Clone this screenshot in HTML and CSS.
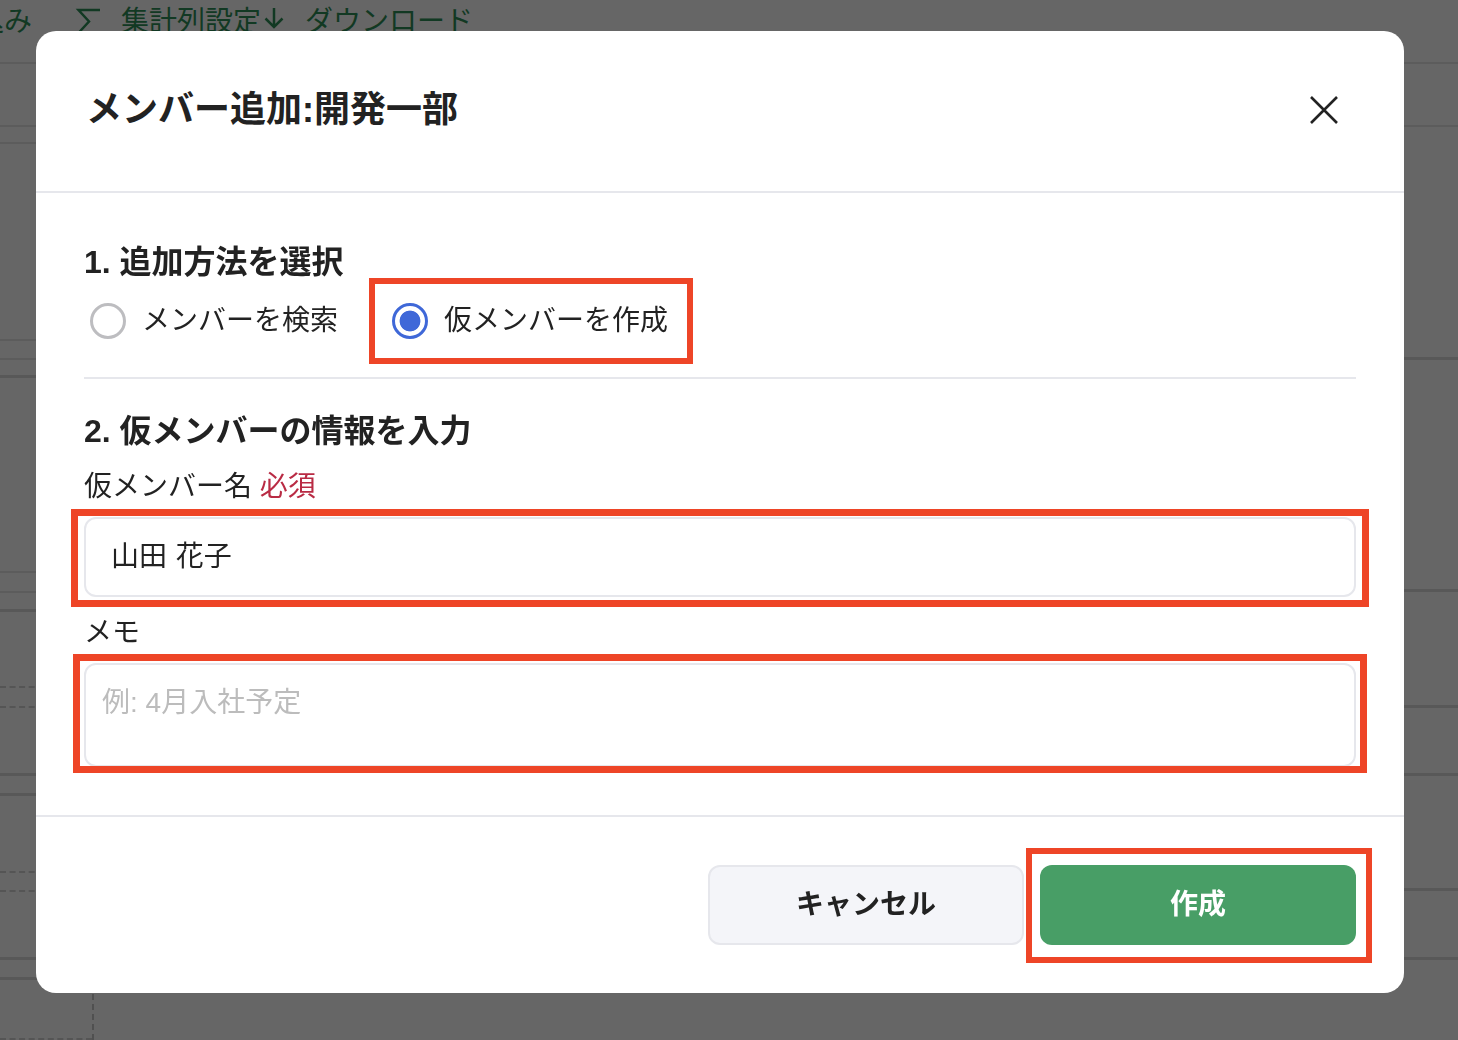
FILE: index.html
```html
<!DOCTYPE html>
<html lang="ja">
<head>
<meta charset="utf-8">
<title>メンバー追加</title>
<link rel="stylesheet" href="styles.css">
</head>
<body>
<div class="page">
  <div class="toolbar">
    <span class="tool tool-first">込み</span>
    <span class="tool tool-sum">
      <svg class="tool-icon" width="28" height="28" viewBox="0 0 28 28"><path d="M25 4H3.500L14 15.500L3.500 27H25"/></svg>
      集計列設定
    </span>
    <span class="tool tool-dl">
      <svg class="tool-icon" width="30" height="30" viewBox="0 0 30 30"><path d="M15 2V21M6.500 12.500L15 21L23.500 12.500M2 25V29M28 25V29"/></svg>
      ダウンロード
    </span>
  </div>
  <div class="columns">
    <div class="col-left">
      <div class="row"></div><div class="row"></div><div class="row"></div><div class="row"></div>
      <div class="row thick"></div><div class="row"></div><div class="row"></div><div class="row thick"></div>
      <div class="row dash"></div><div class="row dash"></div><div class="row thick"></div><div class="row thick"></div>
      <div class="row dash"></div><div class="row dash"></div><div class="row thick"></div><div class="row thick"></div>
      <div class="row dash"></div><div class="row-end"></div>
    </div>
    <div class="col-main">
      <div class="row"></div><div class="row thick"></div><div class="row thick"></div><div class="row thick"></div>
      <div class="row thick"></div><div class="row thick"></div><div class="row thick"></div><div class="row-end"></div>
    </div>
  </div>
</div>

<div class="overlay">
  <div class="modal">
    <header class="modal-head">
      <h1 class="modal-title">メンバー追加:開発一部</h1>
      <button class="close" aria-label="閉じる">
        <svg width="32" height="32" viewBox="0 0 32 32"><path d="M3 3L29 29M29 3L3 29"/></svg>
      </button>
    </header>
    <div class="modal-body">
      <h2 class="step">1. 追加方法を選択</h2>
      <div class="radios">
        <label class="radio"><span class="dot"></span>メンバーを検索</label>
        <label class="radio radio-on"><span class="dot"></span>仮メンバーを作成</label>
      </div>
      <hr class="rule">
      <h2 class="step step-two">2. 仮メンバーの情報を入力</h2>
      <div class="field-label field-first">仮メンバー名 <span class="req">必須</span></div>
      <div class="input">山田 花子</div>
      <div class="field-label field-second">メモ</div>
      <div class="textarea">例: 4月入社予定</div>
    </div>
    <footer class="modal-foot">
      <button class="btn btn-cancel">キャンセル</button>
      <button class="btn btn-create">作成</button>
    </footer>
  </div>
  <div class="mark mark-radio"></div>
  <div class="mark mark-input"></div>
  <div class="mark mark-memo"></div>
  <div class="mark mark-create"></div>
</div>
</body>
</html>
```
FILE: styles.css
```css
* { box-sizing: border-box; }
html, body { margin: 0; height: 100%; overflow: hidden; }
body {
  font-family: "Liberation Sans", "Noto Sans CJK JP", sans-serif;
  color: #222;
  background: #fff;
}

/* page behind the dialog */
.page { height: 1040px; display: flex; flex-direction: column; }
.toolbar {
  height: 64px;
  flex: none;
  display: flex;
  align-items: flex-start;
  border-bottom: 2px solid #e6e6e6;
  font-size: 28px;
  line-height: 44px;
  color: #2f8f57;
}
.tool { display: flex; align-items: flex-start; white-space: nowrap; }
.tool-first { margin-left: -24px; width: 99px; }
.tool-sum { width: 184px; gap: 18px; }
.tool-dl { gap: 16px; }
.tool-icon { fill: none; stroke: currentColor; stroke-width: 2.5; margin-top: 6px; flex: none; }
.columns { flex: 1; display: flex; }
.col-left {
  width: 94px;
  flex: none;
  display: grid;
  grid-template-rows: 63px 17px 197px 19px 18px 195px 20px 19px 76px 20px 68px 20px 77px 19px 68px 20px 60px;
  border-right: 2px dashed #c9c9c9;
}
.col-main {
  flex: 1;
  display: grid;
  grid-template-rows: 63px 233px 232px 116px 68px 115px 69px 80px;
}
.row { border-bottom: 2px solid #e6e6e6; }
.thick { border-bottom: 3px solid #dcdcdc; }
.dash { border-bottom: 2px dashed #d4d4d4; }

/* dialog */
.overlay {
  position: fixed;
  inset: 0;
  background: rgba(0, 0, 0, .6);
}
.modal {
  position: absolute;
  left: 36px;
  top: 31px;
  width: 1368px;
  height: 962px;
  background: #fff;
  border-radius: 20px;
  display: flex;
  flex-direction: column;
}
.modal-head {
  height: 162px;
  flex: none;
  display: flex;
  align-items: center;
  justify-content: space-between;
  padding: 0 64px 2px 50px;
  border-bottom: 2px solid #e6e7ec;
}
.modal-title { margin: 0; font-size: 36px; line-height: 48px; font-weight: 700; }
.close { width: 32px; height: 32px; padding: 0; border: 0; background: none; }
.close svg { display: block; fill: none; stroke: #222; stroke-width: 2.6; }

.modal-body { flex: 1; padding: 48px 48px 0; }
.step { margin: 0; font-size: 32px; line-height: 42px; font-weight: 700; }
.radios { display: flex; height: 76px; align-items: center; padding-left: 6px; gap: 54px; }
.radio { display: flex; align-items: center; gap: 16px; font-size: 28px; line-height: 40px; }
.dot { width: 36px; height: 36px; border-radius: 50%; border: 3px solid #bdbdc0; background: #fff; flex: none; }
.radio-on .dot {
  border-color: #3f68d8;
  background: radial-gradient(circle, #3f68d8 0 10px, #fff 10.8px);
}
.rule { margin: 18px 0 31px; border: 0; height: 2px; background: #e6e7ec; }
.field-label { font-size: 28px; line-height: 40px; }
.field-first { margin-top: 15px; margin-bottom: 10px; }
.field-second { margin-top: 16px; margin-bottom: 10px; }
.req { color: #b92b44; }
.input, .textarea {
  border: 2px solid #e6e7ec;
  border-radius: 12px;
  font-size: 28px;
  background: #fff;
}
.input { height: 80px; line-height: 76px; padding-left: 25px; word-spacing: 1px; }
.textarea { height: 104px; line-height: 40px; padding: 18px 16px; color: #bcbcbc; }

.modal-foot {
  height: 178px;
  flex: none;
  display: flex;
  justify-content: flex-end;
  gap: 16px;
  padding: 48px;
  border-top: 2px solid #e6e7ec;
}
.btn {
  width: 316px;
  height: 80px;
  border-radius: 12px;
  font: 700 28px/40px "Liberation Sans", "Noto Sans CJK JP", sans-serif;
}
.btn-cancel { background: #f4f5f9; border: 2px solid #e6e7ec; color: #222; }
.btn-create { background: #489e66; border: 0; color: #fff; }

/* red review annotations laid over the dialog */
.mark { position: absolute; border: 6px solid #ee4527; }
.mark-radio { left: 369px; top: 278px; width: 324px; height: 86px; }
.mark-input { left: 71px; top: 509px; width: 1298px; height: 98px; border-width: 7px; }
.mark-memo { left: 73px; top: 654px; width: 1294px; height: 119px; border-width: 7px; }
.mark-create { left: 1026px; top: 848px; width: 346px; height: 115px; }
```
